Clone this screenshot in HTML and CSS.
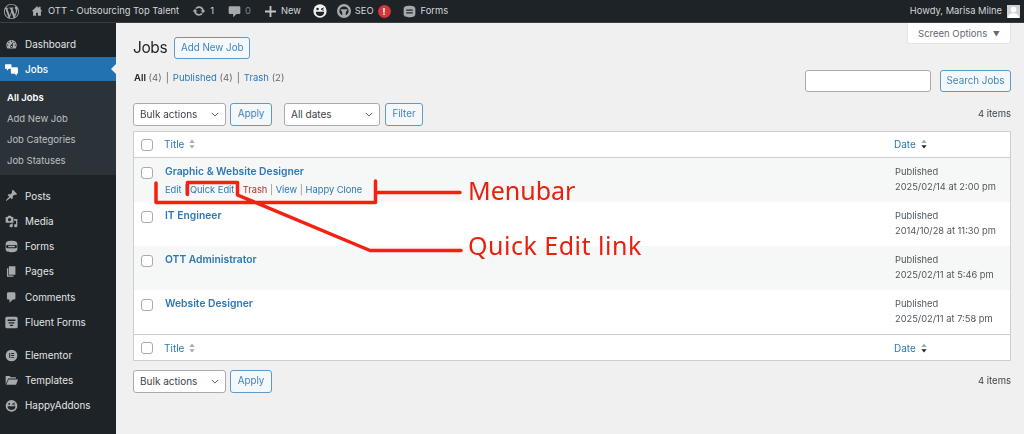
FILE: index.html
```html
<!DOCTYPE html>
<html lang="en">
<head>
<meta charset="utf-8">
<title>Jobs</title>
<link rel="stylesheet" href="styles.css">
</head>
<body>
<div class="page">
<header class="adminbar">
  <svg class="ab-wp" viewBox="0 0 20 20"><path fill-rule="evenodd" d="M20 10c0-5.51-4.49-10-10-10C4.48 0 0 4.49 0 10c0 5.52 4.48 10 10 10 5.51 0 10-4.48 10-10zM7.78 15.37L4.37 6.22c.55-.02 1.17-.08 1.17-.08.5-.06.44-1.13-.06-1.11 0 0-1.45.11-2.37.11-.18 0-.37 0-.58-.01C4.12 2.69 6.87 1.11 10 1.11c2.33 0 4.45.87 6.05 2.34-.68-.11-1.65.39-1.65 1.58 0 .74.45 1.36.9 2.1.35.61.55 1.36.55 2.46 0 1.49-1.4 5-1.4 5l-3.03-8.37c.54-.02.82-.17.82-.17.5-.05.44-1.25-.06-1.22 0 0-1.44.12-2.38.12-.87 0-2.33-.12-2.33-.12-.5-.03-.56 1.2-.06 1.22l.92.08 1.26 3.41zM17.41 10c.24-.64.74-1.87.43-4.25.7 1.29 1.05 2.71 1.05 4.25 0 3.29-1.73 6.24-4.4 7.78.97-2.59 1.94-5.2 2.92-7.78zM6.1 18.09C3.12 16.65 1.11 13.53 1.11 10c0-1.3.23-2.48.72-3.59C3.25 10.3 4.67 14.2 6.1 18.09zm4.03-6.63l2.58 6.98c-.86.29-1.76.45-2.71.45-.79 0-1.57-.11-2.29-.33.81-2.38 1.62-4.74 2.42-7.1z"/></svg>
  <svg class="ab-home" viewBox="0 0 20 20"><path d="M10 2 1 10.5h2.5V18h5v-5h3v5h5v-7.500H19L16 7.700V3h-3v2z"/></svg>
  <span class="ab-text ab-site">OTT - Outsourcing Top Talent</span>
  <svg class="ab-updates" viewBox="0 0 20 20"><path d="M10.200 3.280c3.530 0 6.430 2.610 6.920 6h2.080l-3.500 4-3.500-4h2.320c-.45-1.970-2.210-3.450-4.320-3.450-1.450 0-2.730.71-3.540 1.780L4.950 5.660C6.230 4.200 8.110 3.280 10.200 3.280zm-.4 13.440c-3.520 0-6.430-2.610-6.920-6H.8l3.500-4c1.170 1.330 2.330 2.670 3.500 4H5.480c.45 1.970 2.210 3.450 4.320 3.450 1.450 0 2.730-.71 3.540-1.780l1.710 1.950c-1.280 1.460-3.150 2.380-5.250 2.380z"/></svg>
  <span class="ab-text ab-count">1</span>
  <svg class="ab-comment" viewBox="0 0 20 20"><path d="M3 2h14a2 2 0 0 1 2 2v8a2 2 0 0 1-2 2h-4l-5 5v-5H3a2 2 0 0 1-2-2V4a2 2 0 0 1 2-2z"/></svg>
  <span class="ab-text ab-zero">0</span>
  <svg class="ab-plus" viewBox="0 0 12 12"><path d="M5 0h2v5h5v2H7v5H5V7H0V5h5z"/></svg>
  <span class="ab-text ab-new">New</span>
  <svg class="ab-happy" viewBox="0 0 20 20"><circle cx="10" cy="10" r="9.500" fill="#f0f0f1"/><path d="M4 11h12c0 4-2.500 6-6 6s-6-2-6-6z" fill="#1d2327"/><circle cx="6.500" cy="7" r="1.800" fill="#1d2327"/><path d="M11.500 7.500l4-2M11.500 7.500l4 1.500" stroke="#1d2327" stroke-width="1.400"/></svg>
  <svg class="ab-seo" viewBox="0 0 20 20"><path fill-rule="evenodd" d="M10 0a10 10 0 1 1 0 20 10 10 0 0 1 0-20zm0 3.500a6.500 6.500 0 0 0-2.500 12.500V12L5 7.500h10L12.500 12v4A6.500 6.500 0 0 0 10 3.500z"/></svg>
  <span class="ab-text ab-seo-label">SEO</span>
  <span class="ab-badge">!</span>
  <svg class="ab-forms" viewBox="0 0 20 20"><path fill-rule="evenodd" d="M10 1c5 0 9 1 9 5v8c0 4-4 5-9 5s-9-1-9-5V6c0-4 4-5 9-5zM5 7v2h10V7zm0 4v2h10v-2z"/></svg>
  <span class="ab-text ab-forms-label">Forms</span>
  <span class="ab-text ab-howdy">Howdy, Marisa Milne</span>
  <span class="ab-avatar"><svg viewBox="0 0 14 14"><circle cx="7" cy="5" r="3" fill="#fff"/><path d="M1 14c0-4 3-5 6-5s6 1 6 5z" fill="#fff"/></svg></span>
</header>

<div class="layout">
  <nav class="sidebar">
    <a class="menu-item"><svg viewBox="0 0 20 20"><path d="M3.760 16h12.480c1.100-1.370 1.760-3.110 1.760-5 0-4.420-3.580-8-8-8s-8 3.580-8 8c0 1.890.66 3.630 1.760 5zM10 4c.55 0 1 .45 1 1s-.45 1-1 1-1-.45-1-1 .45-1 1-1zM6 6c.55 0 1 .45 1 1s-.45 1-1 1-1-.45-1-1 .45-1 1-1zm8 0c.55 0 1 .45 1 1s-.45 1-1 1-1-.45-1-1 .45-1 1-1zm-5.370 5.550L12 7v6c0 1.100-.9 2-2 2s-2-.9-2-2c0-.57.24-1.080.63-1.450zM4 10c.55 0 1 .45 1 1s-.45 1-1 1-1-.45-1-1 .45-1 1-1zm12 0c.55 0 1 .45 1 1s-.45 1-1 1-1-.45-1-1 .45-1 1-1zm-5 3c0-.55-.45-1-1-1s-1 .45-1 1 .45 1 1 1 1-.45 1-1z" fill-rule="evenodd"/></svg><span>Dashboard</span></a>
    <a class="menu-item menu-current"><svg viewBox="0 0 20 20"><path d="M1 2h8a1 1 0 0 1 1 1v5a1 1 0 0 1-1 1H6l-3 3V9H1a1 1 0 0 1-1-1V3a1 1 0 0 1 1-1z"/><path d="M11 6.500h7a2 2 0 0 1 2 2v6a2 2 0 0 1-2 2v3l-3-3h-4a2 2 0 0 1-2-2v-6a2 2 0 0 1 2-2z"/></svg><span>Jobs</span></a>
    <div class="submenu">
      <a class="sub-item sub-current">All Jobs</a>
      <a class="sub-item">Add New Job</a>
      <a class="sub-item">Job Categories</a>
      <a class="sub-item">Job Statuses</a>
    </div>
    <a class="menu-item"><svg viewBox="0 0 20 20"><path d="M10.440 3.020l1.820-1.820 6.360 6.350-1.830 1.820c-1.050-.68-2.480-.57-3.410.36l-.75.75c-.92.93-1.040 2.350-.35 3.410l-1.830 1.820-2.410-2.410-2.800 2.790c-.42.42-3.380 2.710-3.800 2.290s1.860-3.390 2.280-3.810l2.790-2.790L4.100 9.360l1.830-1.820c1.050.69 2.480.57 3.400-.36l.75-.75c.93-.92 1.050-2.350.36-3.410z"/></svg><span>Posts</span></a>
    <a class="menu-item"><svg viewBox="0 0 20 20"><path d="M13 11V4c0-.55-.45-1-1-1h-1.670L9 1H5L3.670 3H2c-.55 0-1 .45-1 1v7c0 .55.45 1 1 1h10c.55 0 1-.45 1-1zM7 4.500c1.380 0 2.500 1.120 2.500 2.500S8.380 9.500 7 9.500 4.500 8.380 4.500 7 5.620 4.500 7 4.500zM14 6h5v10.500c0 1.380-1.120 2.500-2.500 2.500S14 17.880 14 16.500s1.120-2.500 2.500-2.500c.17 0 .34.02.5.05V9h-3V6zm-4 8.050V13h2v3.500c0 1.380-1.120 2.500-2.500 2.500S7 17.880 7 16.500 8.120 14 9.500 14c.17 0 .34.02.5.05z" fill-rule="evenodd"/></svg><span>Media</span></a>
    <a class="menu-item"><svg viewBox="0 0 20 20"><path fill-rule="evenodd" d="M10 1c5 0 9 1 9 5v8c0 4-4 5-9 5s-9-1-9-5V6c0-4 4-5 9-5zM4 7.500A1.500 1.500 0 0 0 4 12.500h12a1.500 1.500 0 0 0 0-5zM5 9h10v2H5z"/></svg><span>Forms</span></a>
    <a class="menu-item"><svg viewBox="0 0 20 20"><path d="M6 15V2h10v13H6zm-1 1h8v2H3V5h2v11z"/></svg><span>Pages</span></a>
    <a class="menu-item"><svg viewBox="0 0 20 20"><path d="M5 2h9c1.100 0 2 .9 2 2v7c0 1.100-.9 2-2 2h-2l-5 5v-5H5c-1.100 0-2-.9-2-2V4c0-1.100.9-2 2-2z"/></svg><span>Comments</span></a>
    <a class="menu-item"><svg viewBox="0 0 20 20"><path fill-rule="evenodd" d="M3 1h14a2.500 2.500 0 0 1 2.500 2.500v13A2.500 2.500 0 0 1 17 19H3a2.500 2.500 0 0 1-2.500-2.500v-13A2.500 2.500 0 0 1 3 1zm1 4.500v2h12v-2zm1.500 4v2h9v-2zm2 4v2h5v-2z"/></svg><span>Fluent Forms</span></a>
    <a class="menu-item menu-group"><svg viewBox="0 0 20 20"><path fill-rule="evenodd" d="M10 1a9 9 0 1 1 0 18 9 9 0 0 1 0-18zM6.500 6v8h1.500V6zm3 0v1.500H14V6zm0 3.200v1.600H14V9.200zm0 3.300V14H14v-1.500z"/></svg><span>Elementor</span></a>
    <a class="menu-item"><svg viewBox="0 0 20 20"><path d="M1 3h6l2 2h7a1 1 0 0 1 1 1v1H5L1 16z"/><path d="M5.500 8.500H20l-3 8H2z"/></svg><span>Templates</span></a>
    <a class="menu-item"><svg viewBox="0 0 20 20"><circle cx="10" cy="10.500" r="9"/><path d="M4 11h12c0 4-2.500 5.500-6 5.500S4 15 4 11z" fill="#1d2327"/><circle cx="6.500" cy="7.500" r="1.500" fill="#1d2327"/><path d="M11.500 8l4-2M11.500 8l4 1.500" stroke="#1d2327" stroke-width="1.300"/></svg><span>HappyAddons</span></a>
  </nav>

  <main class="main">
    <button class="screen-options">Screen Options <span class="so-arrow">▼</span></button>
    <div class="page-head">
      <h1>Jobs</h1>
      <a class="btn btn-head">Add New Job</a>
    </div>
    <div class="filter-row">
      <ul class="subsubsub">
        <li><b>All</b> <i>(4)</i></li>
        <li class="sep">|</li>
        <li><a>Published</a> <i>(4)</i></li>
        <li class="sep">|</li>
        <li><a>Trash</a> <i>(2)</i></li>
      </ul>
      <div class="search">
        <span class="search-input"></span>
        <a class="btn btn-search">Search Jobs</a>
      </div>
    </div>
    <div class="tablenav">
      <div class="select select-bulk">Bulk actions<svg viewBox="0 0 10 6"><path d="M1 1l4 4 4-4" fill="none" stroke="#50575e" stroke-width="1.200"/></svg></div>
      <a class="btn btn-apply">Apply</a>
      <div class="select select-date">All dates<svg viewBox="0 0 10 6"><path d="M1 1l4 4 4-4" fill="none" stroke="#50575e" stroke-width="1.200"/></svg></div>
      <a class="btn btn-filter">Filter</a>
      <span class="count">4 items</span>
    </div>

    <table class="jobs">
      <thead>
        <tr>
          <th class="c-check"><span class="check"></span></th>
          <th class="c-title"><a>Title</a><svg class="sort" viewBox="0 0 8 12"><path d="M4 0l3.500 4.500h-7zM4 12 .5 7.500h7z" fill="#a7aaad"/></svg></th>
          <th class="c-date"><a>Date</a><svg class="sort" viewBox="0 0 8 12"><path d="M4 0l3.500 4.500h-7z" fill="#a7aaad"/><path d="M4 12 .5 7.500h7z" fill="#1d2327"/></svg></th>
        </tr>
      </thead>
      <tbody>
        <tr class="odd">
          <td class="c-check"><span class="check"></span></td>
          <td class="c-title"><a class="job">Graphic &amp; Website Designer</a>
            <div class="actions"><a>Edit</a> <i>|</i> <a>Quick Edit</a> <i>|</i> <a class="trash">Trash</a> <i>|</i> <a>View</a> <i>|</i> <a>Happy Clone</a></div>
          </td>
          <td class="c-date">Published<br>2025/02/14 at 2:00 pm</td>
        </tr>
        <tr>
          <td class="c-check"><span class="check"></span></td>
          <td class="c-title"><a class="job">IT Engineer</a></td>
          <td class="c-date">Published<br>2014/10/28 at 11:30 pm</td>
        </tr>
        <tr class="odd">
          <td class="c-check"><span class="check"></span></td>
          <td class="c-title"><a class="job">OTT Administrator</a></td>
          <td class="c-date">Published<br>2025/02/11 at 5:46 pm</td>
        </tr>
        <tr>
          <td class="c-check"><span class="check"></span></td>
          <td class="c-title"><a class="job">Website Designer</a></td>
          <td class="c-date">Published<br>2025/02/11 at 7:58 pm</td>
        </tr>
      </tbody>
      <tfoot>
        <tr>
          <th class="c-check"><span class="check"></span></th>
          <th class="c-title"><a>Title</a><svg class="sort" viewBox="0 0 8 12"><path d="M4 0l3.500 4.500h-7zM4 12 .5 7.500h7z" fill="#a7aaad"/></svg></th>
          <th class="c-date"><a>Date</a><svg class="sort" viewBox="0 0 8 12"><path d="M4 0l3.500 4.500h-7z" fill="#a7aaad"/><path d="M4 12 .5 7.500h7z" fill="#1d2327"/></svg></th>
        </tr>
      </tfoot>
    </table>

    <div class="tablenav tablenav-bottom">
      <div class="select select-bulk">Bulk actions<svg viewBox="0 0 10 6"><path d="M1 1l4 4 4-4" fill="none" stroke="#50575e" stroke-width="1.200"/></svg></div>
      <a class="btn btn-apply">Apply</a>
      <span class="count">4 items</span>
    </div>
  </main>
</div>
</div>

<svg class="markup" viewBox="0 0 1024 434">
  <path d="M156 183V202.500H375.500V181M377 192.500H460M187.500 194.500V182.500H237.500V195L370 250.500H461"/>
</svg>
<span class="callout callout-menubar">Menubar</span>
<span class="callout callout-quick">Quick Edit link</span>
</body>
</html>
```

FILE: styles.css
```css
* { box-sizing: border-box; }
html, body { margin: 0; padding: 0; height: 434px; overflow: hidden; }
body {
  position: relative;
  background: #f0f0f1;
  color: #3c434a;
  font: 10.2px/1.3 Inter, "Liberation Sans", sans-serif;
}
.page { filter: blur(.3px); }
a { color: #2d78b5; text-decoration: none; }
i { font-style: normal; }

/* admin bar */
.adminbar {
  display: flex;
  align-items: center;
  height: 23px;
  background: #1d2327;
  border-bottom: 1px solid #3a3f44;
  color: #d5d7d9;
  fill: #a7aaad;
}
.adminbar svg { flex: none; }
.ab-text { font-size: 9.350px; white-space: nowrap; }
.ab-wp { width: 15px; height: 15px; margin-left: 4px; }
.ab-home { width: 12px; height: 12px; margin-left: 12px; }
.ab-site { margin-left: 5px; }
.ab-updates { width: 14px; height: 14px; margin-left: 13px; }
.ab-count { margin-left: 4px; }
.ab-comment { width: 13px; height: 13px; margin-left: 14px; }
.ab-zero { margin-left: 4px; color: #7d8389; }
.ab-plus { width: 11px; height: 11px; margin-left: 14px; fill: #c3c4c7; }
.ab-new { margin-left: 5px; }
.ab-happy { width: 14px; height: 14px; margin-left: 12px; }
.ab-seo { width: 14px; height: 14px; margin-left: 10px; }
.ab-seo-label { margin-left: 4px; }
.ab-badge {
  width: 13px;
  height: 13px;
  margin-left: 4px;
  border-radius: 50%;
  background: #d63638;
  color: #fff;
  font-size: 9px;
  font-weight: 700;
  line-height: 13px;
  text-align: center;
}
.ab-forms { width: 13px; height: 13px; margin-left: 12px; }
.ab-forms-label { margin-left: 5px; }
.ab-howdy { margin-left: auto; }
.ab-avatar {
  display: flex;
  width: 13px;
  height: 13px;
  margin: 0 4px 0 5px;
  background: #d0d1d3;
}

/* layout */
.layout { display: flex; height: 411px; }
.sidebar {
  flex: none;
  width: 116px;
  padding-top: 9px;
  background: #1d2327;
  color: #e2e3e4;
  fill: #a7aaad;
}
.menu-item {
  display: flex;
  align-items: center;
  gap: 7px;
  height: 25.300px;
  padding-left: 5px;
  color: #e2e3e4;
  font-size: 9.900px;
}
.menu-item svg { flex: none; width: 13px; height: 13px; }
.menu-current {
  position: relative;
  height: 24px;
  background: #2271b1;
  color: #fff;
  fill: #fff;
  font-weight: 500;
}
.menu-current::after {
  content: "";
  position: absolute;
  right: 0;
  top: 7px;
  border: 5px solid transparent;
  border-right-color: #f0f0f1;
}
.submenu {
  height: 94px;
  margin-bottom: 8px;
  padding-top: 7px;
  background: #2c3338;
}
.sub-item {
  display: block;
  height: 21px;
  padding-left: 7px;
  color: #bcc0c4;
  font-size: 9.500px;
  line-height: 20px;
}
.sub-current { color: #fff; font-weight: 600; }
.menu-group { margin-top: 7.500px; }

/* main */
.main {
  position: relative;
  flex: 1;
  min-width: 0;
  padding: 14px 13px 0 17px;
}
.screen-options {
  position: absolute;
  top: 0;
  right: 13px;
  width: 104px;
  height: 21px;
  padding: 0;
  border: 1px solid #e4e4e6;
  border-top: 0;
  border-radius: 0 0 3px 3px;
  background: #fff;
  color: #646970;
  font: 9.500px Inter, "Liberation Sans", sans-serif;
}
.so-arrow { margin-left: 3px; font-size: 7px; }
.page-head { display: flex; align-items: center; height: 22px; }
h1 {
  margin: 0 7px 0 0;
  color: #1d2327;
  font-size: 15.500px;
  font-weight: 400;
  letter-spacing: -.4px;
}
.btn {
  display: flex;
  align-items: center;
  justify-content: center;
  flex: none;
  height: 22px;
  border: 1px solid #5f9ac6;
  border-radius: 3px;
  background: #f4f8fb;
  color: #3f84bb;
  font-size: 9.800px;
  white-space: nowrap;
}
.btn-head { width: 76px; }
.filter-row {
  display: flex;
  justify-content: space-between;
  height: 22px;
  margin-top: 11px;
}
.subsubsub {
  display: flex;
  gap: 4px;
  margin: 0;
  padding: 0 0 0 1px;
  list-style: none;
  font-size: 9.500px;
  line-height: 16px;
}
.subsubsub b { color: #1d2327; font-weight: 600; }
.subsubsub i, .sep { color: #646970; }
.search { display: flex; gap: 9px; }
.search-input {
  width: 126px;
  height: 22px;
  border: 1px solid #a9abae;
  border-radius: 3px;
  background: #fff;
}
.btn-search { width: 71px; }
.tablenav {
  display: flex;
  align-items: center;
  height: 23px;
  margin-top: 11px;
}
.select {
  display: flex;
  align-items: center;
  justify-content: space-between;
  height: 23px;
  padding: 0 6px;
  border: 1px solid #a9abae;
  border-radius: 3px;
  background: #fff;
  color: #3c434a;
  font-size: 10px;
}
.select svg { width: 8px; height: 5px; }
.select-bulk { width: 93px; }
.select-date { width: 96px; margin-left: 12px; }
.btn-apply { width: 42px; height: 23px; margin-left: 4px; }
.btn-filter { width: 38px; height: 23px; margin-left: 5px; }
.count { margin-left: auto; color: #3c434a; font-size: 9.500px; }
.tablenav-bottom { margin-top: 9px; }

/* table */
.jobs {
  width: 878px;
  height: 230px;
  margin-top: 5px;
  border: 1px solid #cdced1;
  border-spacing: 0;
  background: #fff;
  table-layout: fixed;
}
.jobs th {
  height: 26px;
  padding: 0;
  font-weight: 400;
  font-size: 10px;
  text-align: left;
  vertical-align: middle;
}
.jobs thead th { border-bottom: 1px solid #cdced1; }
.jobs tfoot th { border-top: 1px solid #cdced1; padding-top: 1px; }
.jobs td { height: 44px; padding: 0; vertical-align: top; }
.odd { background: #f6f7f7; }
.c-check { width: 30px; padding-left: 7px !important; }
.c-date { width: 116px; }
.jobs td.c-title { padding-left: 1px; padding-top: 6px; }
.jobs td.c-date { padding-left: 1px; padding-top: 6px; color: #50575e; font-size: 9.300px; line-height: 15px; }
.jobs td.c-check { padding-top: 9px; }
.check {
  display: block;
  width: 12px;
  height: 12px;
  border: 1px solid #a9abae;
  border-radius: 3px;
  background: #fff;
}
.sort { width: 6px; height: 10px; margin-left: 5px; vertical-align: -1px; }
.job { display: block; color: #2d78b5; font-size: 10.300px; font-weight: 600; line-height: 14px; }
.actions { margin-top: 5px; color: #8c8f94; font-size: 9.300px; line-height: 13px; white-space: nowrap; }
.trash { color: #b32d2e; }

/* annotation drawn over the screenshot */
.markup {
  position: absolute;
  left: 0;
  top: 0;
  width: 1024px;
  height: 434px;
  pointer-events: none;
}
.markup path {
  fill: none;
  stroke: #f5200f;
  stroke-width: 3.500;
  stroke-linecap: round;
  stroke-linejoin: round;
}
.callout {
  position: absolute;
  left: 468px;
  color: #e8200f;
  font: 25px/30px "Noto Sans", sans-serif;
  white-space: nowrap;
}
.callout-menubar { top: 175px; }
.callout-quick { top: 230px; letter-spacing: .5px; }
```
